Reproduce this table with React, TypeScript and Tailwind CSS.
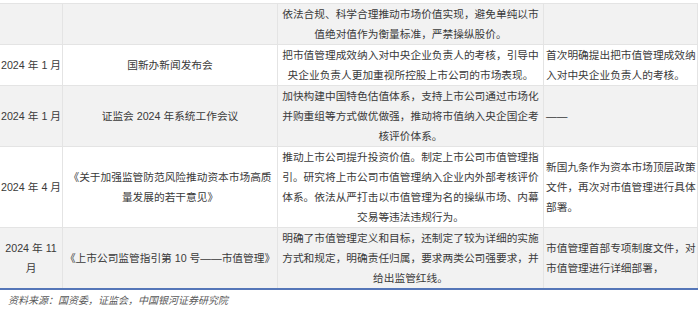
const rows = [
  {
    date: '',
    source: '',
    content: '依法合规、科学合理推动市场价值实现，避免单纯以市值绝对值作为衡量标准，严禁操纵股价。',
    note: '',
  },
  {
    date: '2024 年 1 月',
    source: '国新办新闻发布会',
    content: '把市值管理成效纳入对中央企业负责人的考核，引导中央企业负责人更加重视所控股上市公司的市场表现。',
    note: '首次明确提出把市值管理成效纳入对中央企业负责人的考核。',
  },
  {
    date: '2024 年 1 月',
    source: '证监会 2024 年系统工作会议',
    content: '加快构建中国特色估值体系，支持上市公司通过市场化并购重组等方式做优做强，推动将市值纳入央企国企考核评价体系。',
    note: '——',
  },
  {
    date: '2024 年 4 月',
    source: '《关于加强监管防范风险推动资本市场高质量发展的若干意见》',
    content: '推动上市公司提升投资价值。制定上市公司市值管理指引。研究将上市公司市值管理纳入企业内外部考核评价体系。依法从严打击以市值管理为名的操纵市场、内幕交易等违法违规行为。',
    note: '新国九条作为资本市场顶层政策文件，再次对市值管理进行具体部署。',
  },
  {
    date: '2024 年 11 月',
    source: '《上市公司监管指引第 10 号——市值管理》',
    content: '明确了市值管理定义和目标，还制定了较为详细的实施方式和规定，明确责任归属，要求两类公司强要求，并给出监管红线。',
    note: '市值管理首部专项制度文件，对市值管理进行详细部署，',
  },
]

export default function App() {
  return (
    <div
      lang="zh-CN"
      className="w-[700px] h-[320px] bg-white pt-[3px] text-[#3a3a3a] text-[10.7px] leading-[20px]"
      style={{ fontFamily: '"Liberation Sans", "Noto Sans CJK SC", sans-serif' }}
    >
      {/* policy table */}
      <div className="w-[698px] border-t border-b-2 border-t-[#e4e4e4] border-b-[#5576b8]">
        {rows.map((row, i) => {
          const last = i === rows.length - 1
          const bg = i % 2 === 0 ? 'bg-[#f2f2f2]' : 'bg-white'
          const line = last ? '' : 'border-b border-[#e4e4e4]'
          return (
            <div key={i} className={`grid grid-cols-[63px_215px_266px_154px] ${bg}`}>
              <div className={`flex items-center justify-center text-center border-r border-[#e4e4e4] ${line}`}>
                {row.date}
              </div>
              <div className={`flex items-center justify-center text-center px-[2px] border-r border-[#e4e4e4] ${line}`}>
                <span className={last ? 'whitespace-nowrap' : ''}>{row.source}</span>
              </div>
              <div className={`flex items-center justify-center text-center px-[3px] border-r border-[#e4e4e4] ${line}`}>
                {row.content}
              </div>
              <div className={`flex items-center pl-[2px] border-r border-[#e4e4e4] ${line}`}>
                {row.note}
              </div>
            </div>
          )
        })}
      </div>

      <div className="pl-[8px] pt-[4px] text-[10px] leading-[14px] italic text-[#5a5a5a]">
        资料来源：国资委，证监会，中国银河证券研究院
      </div>
    </div>
  )
}
